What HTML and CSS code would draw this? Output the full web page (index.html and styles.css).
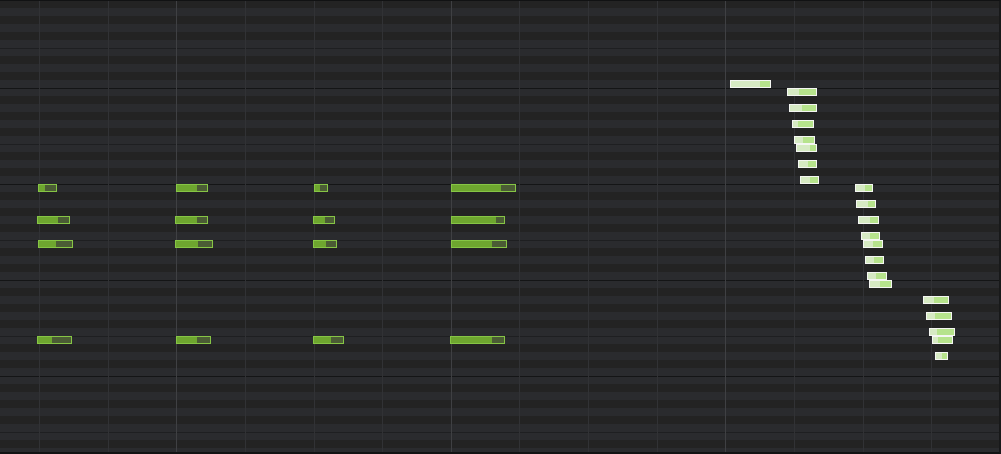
FILE: index.html
```html
<!DOCTYPE html>
<html lang="en">
<head>
<meta charset="utf-8">
<title>Piano roll</title>
<link rel="stylesheet" href="styles.css">
</head>
<body>
<div class="roll">
  <div class="beats">
    <div class="lead"></div>
    <div class="beat"></div>
    <div class="beat"></div>
    <div class="beat bar"></div>
    <div class="beat"></div>
    <div class="beat"></div>
    <div class="beat"></div>
    <div class="beat bar"></div>
    <div class="beat"></div>
    <div class="beat"></div>
    <div class="beat"></div>
    <div class="beat bar"></div>
    <div class="beat"></div>
    <div class="beat"></div>
    <div class="beat"></div>
  </div>
  <div class="notes">
    <div class="note" style="left:38px;top:184px;width:19px;--v:6px"></div>
    <div class="note" style="left:37px;top:216px;width:33px;--v:20px"></div>
    <div class="note" style="left:38px;top:240px;width:35px;--v:17px"></div>
    <div class="note" style="left:37px;top:336px;width:35px;--v:14px"></div>

    <div class="note" style="left:176px;top:184px;width:32px;--v:20px"></div>
    <div class="note" style="left:175px;top:216px;width:33px;--v:21px"></div>
    <div class="note" style="left:175px;top:240px;width:38px;--v:22px"></div>
    <div class="note" style="left:176px;top:336px;width:35px;--v:20px"></div>

    <div class="note" style="left:314px;top:184px;width:14px;--v:5px"></div>
    <div class="note" style="left:313px;top:216px;width:22px;--v:11px"></div>
    <div class="note" style="left:313px;top:240px;width:24px;--v:12px"></div>
    <div class="note" style="left:313px;top:336px;width:31px;--v:17px"></div>

    <div class="note" style="left:451px;top:184px;width:65px;--v:49px"></div>
    <div class="note" style="left:451px;top:216px;width:54px;--v:44px"></div>
    <div class="note" style="left:451px;top:240px;width:56px;--v:40px"></div>
    <div class="note" style="left:450px;top:336px;width:55px;--v:41px"></div>

    <div class="note sel" style="left:730px;top:80px;width:41px;--v:29px"></div>
    <div class="note sel" style="left:787px;top:88px;width:30px;--v:11px"></div>
    <div class="note sel" style="left:789px;top:104px;width:28px;--v:12px"></div>
    <div class="note sel" style="left:792px;top:120px;width:22px;--v:5px"></div>
    <div class="note sel" style="left:794px;top:136px;width:21px;--v:8px"></div>
    <div class="note sel" style="left:796px;top:144px;width:21px;--v:13px"></div>
    <div class="note sel" style="left:798px;top:160px;width:19px;--v:9px"></div>
    <div class="note sel" style="left:800px;top:176px;width:19px;--v:9px"></div>

    <div class="note sel" style="left:855px;top:184px;width:18px;--v:9px"></div>
    <div class="note sel" style="left:856px;top:200px;width:20px;--v:11px"></div>
    <div class="note sel" style="left:858px;top:216px;width:21px;--v:11px"></div>
    <div class="note sel" style="left:861px;top:232px;width:19px;--v:8px"></div>
    <div class="note sel" style="left:863px;top:240px;width:20px;--v:9px"></div>
    <div class="note sel" style="left:865px;top:256px;width:19px;--v:8px"></div>
    <div class="note sel" style="left:867px;top:272px;width:20px;--v:8px"></div>
    <div class="note sel" style="left:869px;top:280px;width:23px;--v:10px"></div>

    <div class="note sel" style="left:923px;top:296px;width:26px;--v:10px"></div>
    <div class="note sel" style="left:926px;top:312px;width:26px;--v:8px"></div>
    <div class="note sel" style="left:929px;top:328px;width:26px;--v:7px"></div>
    <div class="note sel" style="left:932px;top:336px;width:21px;--v:5px"></div>
    <div class="note sel" style="left:935px;top:352px;width:13px;--v:6px"></div>
  </div>
</div>
</body>
</html>
```

FILE: styles.css
```css
html, body {
  margin: 0;
  padding: 0;
  background: #232323;
}

.roll {
  position: relative;
  box-sizing: border-box;
  width: 1001px;
  height: 454px;
  overflow: hidden;
  border-top: 1px solid #111213;
  border-bottom: 2px solid #121314;
  border-right: 2px solid #18191a;
  background-origin: border-box;
  background-image: linear-gradient(to bottom,
    #141516 0 1px,
    #2a2b2e 1px 8px,
    #232323 8px 16px,
    #2a2b2e 16px 24px,
    #232323 24px 32px,
    #2a2b2e 32px 40px,
    #232323 40px 48px,
    #2a2b2e 48px 56px,
    #1e1f21 56px 57px,
    #2a2b2e 57px 64px,
    #232323 64px 72px,
    #2a2b2e 72px 80px,
    #232323 80px 88px,
    #2a2b2e 88px 96px);
  background-size: 100% 96px;
  background-position: 0 88px;
  background-repeat: repeat;
}

.beats {
  display: grid;
  grid-template-columns: 39px repeat(14, 68.625px);
  height: 100%;
}

.beat {
  border-left: 1px solid #313235;
}

.beat.bar {
  border-left-color: #3f4043;
}

.notes {
  position: absolute;
  inset: -1px 0 0 0;
}

.note {
  position: absolute;
  box-sizing: border-box;
  height: 8px;
  border: 1px solid #86c545;
  background: linear-gradient(to right, #6ea62f var(--v), #4b5c35 var(--v));
}

.note.sel {
  border-color: #f4f6f2;
  background: linear-gradient(to right, #d6eac3 var(--v), #b6e38c var(--v));
}
```
